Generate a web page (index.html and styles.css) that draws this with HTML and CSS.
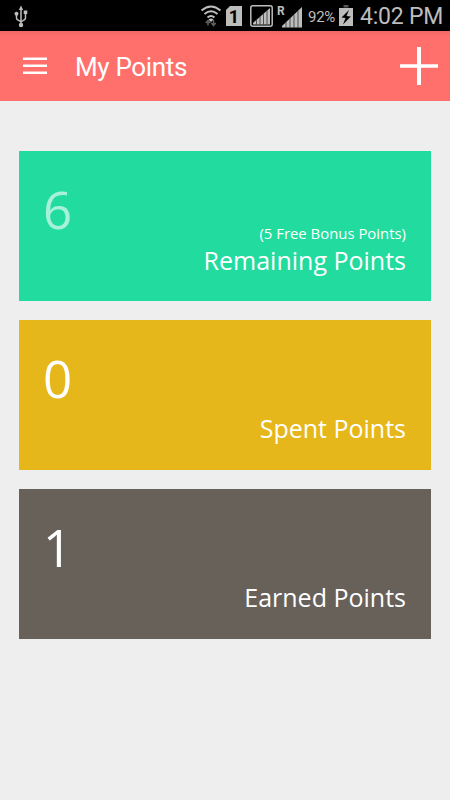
FILE: index.html
```
<!DOCTYPE html>
<html lang="en">
<head>
<meta charset="utf-8">
<title>My Points</title>
<link rel="stylesheet" href="styles.css">
</head>
<body>
<div class="status">
  <svg class="usb" width="16" height="24" viewBox="0 0 16 24" fill="none" stroke="#bdbdbd" stroke-width="1.500">
    <path d="M8 5V20M3.500 9v4q0 1.500 1.500 2L8 17M12.500 9v4q0 1.500-1.500 2L8 17"/>
    <path d="M8 .5 10.200 5H5.800Z" fill="#bdbdbd" stroke="none"/>
    <circle cx="3.500" cy="8.700" r="2" fill="#bdbdbd" stroke="none"/>
    <path d="M10.700 5.500h3.600v3.500h-3.600z" fill="#bdbdbd" stroke="none"/>
    <circle cx="8" cy="20" r="2.200" fill="#bdbdbd" stroke="none"/>
  </svg>
  <div class="indicators">
    <svg class="wifi" width="22" height="24" viewBox="0 0 22 24" fill="none" stroke="#bdbdbd" stroke-width="2">
      <path d="M1.500 5.500Q11-2.500 20.500 5.500M4.500 9Q11 3.500 17.500 9M7.500 12.500Q11 9.500 14.500 12.500"/>
      <path d="M11 17 8.500 14.500Q11 12.500 13.500 14.500Z" fill="#bdbdbd" stroke="none"/>
      <path d="M8 20.500v-5M5.800 18 8 15.600 10.200 18M13.500 15v5M11.300 18 13.500 20.500 15.700 18" stroke="#606060" stroke-width="1.500"/>
    </svg>
    <div class="sim">1</div>
    <svg class="signal-box" width="23" height="22" viewBox="0 0 23 22">
      <rect x=".8" y=".8" width="21.400" height="20.400" rx="2" fill="none" stroke="#bdbdbd" stroke-width="1.500"/>
      <path d="M3 19.500V18L20 3V19.500Z" fill="#bdbdbd"/>
      <path d="M6.500 14v5.500M10 11v8.500M13.500 8v11.500M17 5v14.500" stroke="#333" stroke-width=".8"/>
    </svg>
    <svg class="signal" width="27" height="24" viewBox="0 0 27 24">
      <path d="M6 22.500V21L26 2V22.500Z" fill="#bdbdbd"/>
      <path d="M10 17v6M14 13v10M18 10v13M22 6v17" stroke="#333" stroke-width=".8"/>
      <text class="roaming" x="1" y="9.500">R</text>
    </svg>
    <span class="percent">92%</span>
    <svg class="battery" width="14" height="22" viewBox="0 0 14 22">
      <path d="M4.500 0h5v2.500h-5z" fill="#555"/>
      <path d="M0 3h14v18H0z" fill="#bdbdbd"/>
      <path d="M10 5 2.500 12.500 6.500 13 4 19.500 11.800 11.500 7.500 11Z" fill="#000"/>
    </svg>
    <span class="time">4:02 PM</span>
  </div>
</div>
<header class="bar">
  <svg class="menu" width="24" height="18" viewBox="0 0 24 18" fill="#fff"><path d="M0 0.500h24v2.500H0zM0 7.500h24v2.500H0zM0 14.500h24v2.500H0z"/></svg>
  <h1 class="title">My Points</h1>
  <svg class="plus" width="38" height="38" viewBox="0 0 38 38" fill="#fff"><path d="M17 0h4v17.200H38v3.600H21V38h-4V20.800H0v-3.600h17z"/></svg>
</header>
<main class="cards">
  <section class="card remaining">
    <div class="value">6</div>
    <div class="labels"><div class="note">(5 Free Bonus Points)</div><div class="label">Remaining Points</div></div>
  </section>
  <section class="card spent">
    <div class="value">0</div>
    <div class="labels"><div class="label">Spent Points</div></div>
  </section>
  <section class="card earned">
    <div class="value">1</div>
    <div class="labels"><div class="label">Earned Points</div></div>
  </section>
</main>
</body>
</html>
```
FILE: styles.css
```
* { box-sizing: border-box; }
body {
  margin: 0;
  height: 800px;
  background: #eeeeee;
  font-family: "Open Sans", sans-serif;
  color: #fff;
  overflow: hidden;
}
.status {
  height: 31px;
  background: #000;
  color: #bdbdbd;
  font-family: Roboto, sans-serif;
  display: flex;
  justify-content: space-between;
  align-items: flex-start;
  padding: 5px 8px 0 13px;
}
.indicators { display: flex; align-items: flex-start; }
.wifi { margin-right: 4px; }
.sim {
  width: 16px;
  height: 20px;
  margin: 1px 8px 0 0;
  background: #bdbdbd;
  clip-path: polygon(4px 0, 100% 0, 100% 100%, 0 100%, 0 4px);
  color: #000;
  font-size: 18px;
  font-weight: 700;
  line-height: 21px;
  text-align: center;
}
.signal-box { margin-right: 3px; }
.signal { margin-right: 5px; }
.roaming { font: 700 12px Roboto, sans-serif; fill: #bdbdbd; }
.percent { width: 28px; margin-right: 3px; font-size: 15px; line-height: 24px; letter-spacing: -0.3px; }
.battery { margin-right: 7px; }
.time { width: 82px; font-size: 23px; line-height: 23px; letter-spacing: -0.2px; white-space: nowrap; }
.bar {
  height: 70px;
  background: linear-gradient(#f16865, #ff6f6c 6px);
  display: flex;
  align-items: center;
  padding: 0 12px 0 23px;
}
.title {
  flex: 1;
  margin: 2px 0 0 28px;
  font: 400 26px/36px Roboto, sans-serif;
  letter-spacing: -0.35px;
}
.cards {
  display: flex;
  flex-direction: column;
  gap: 19px;
  padding: 50px 19px 0;
}
.card {
  height: 150px;
  padding: 24px 25px 25px;
  display: flex;
  flex-direction: column;
  justify-content: space-between;
}
.remaining { background: #21dc9e; padding-bottom: 24px; }
.spent { background: #e6b71a; }
.earned { background: #67615a; }
.value { font-size: 51px; line-height: 68px; height: 68px; margin-left: -1px; }
.remaining .value { color: #a6f1d8; }
.labels { text-align: right; margin-top: -30px; }
.note { font-size: 14.900px; line-height: 20px; }
.label { font-size: 25px; line-height: 34px; }
```
